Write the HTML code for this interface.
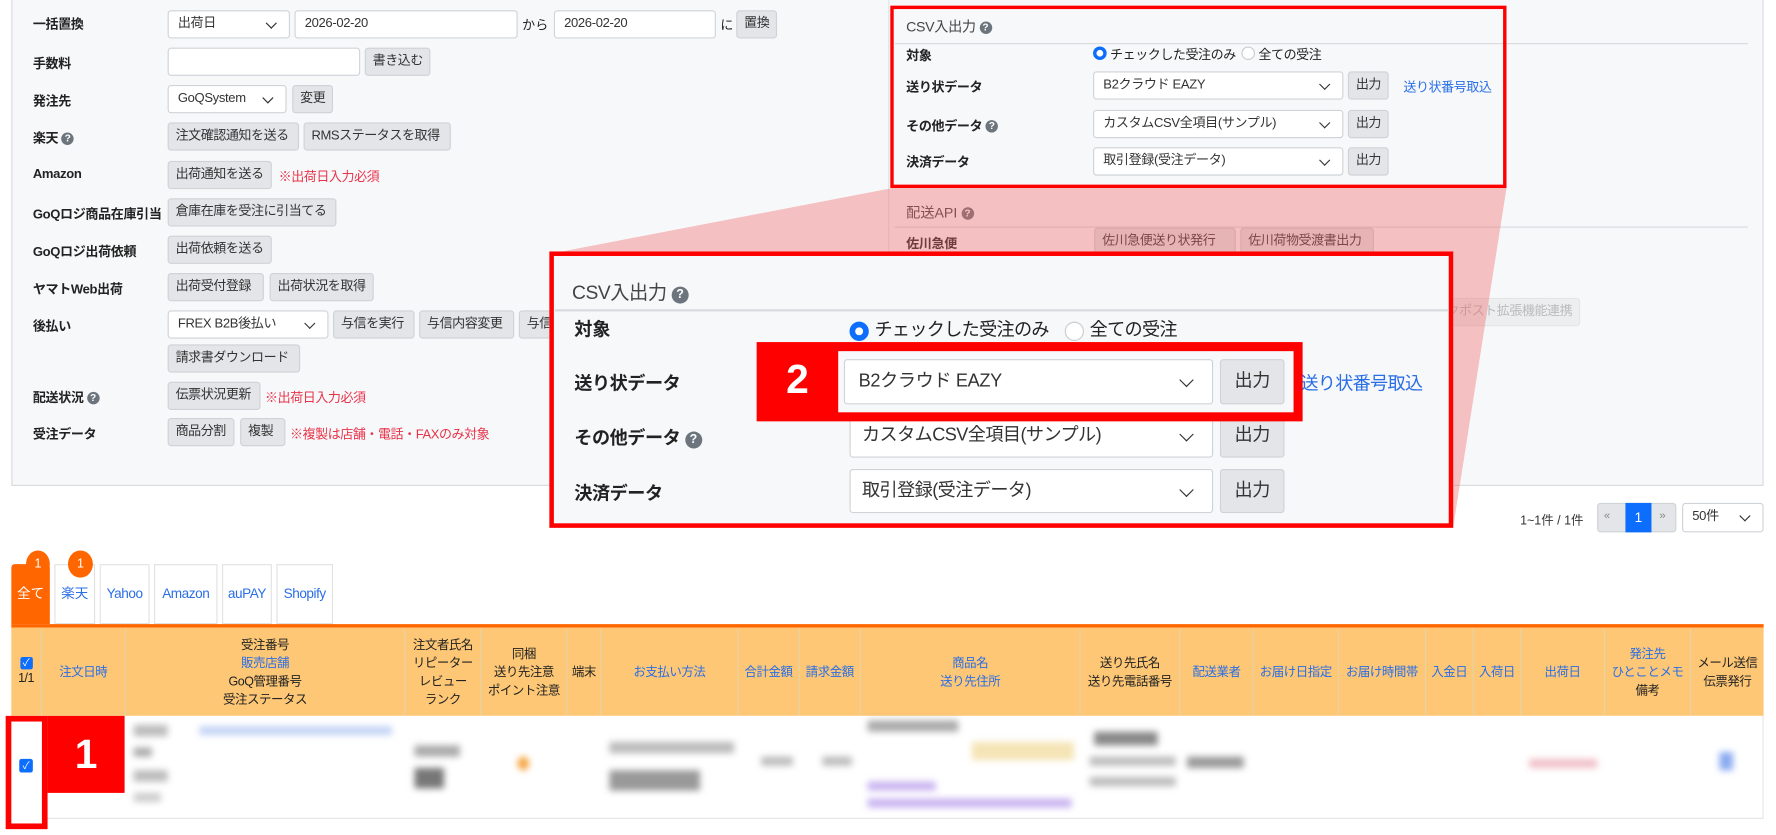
<!DOCTYPE html>
<html><head><meta charset="utf-8"><style>
*{box-sizing:border-box;margin:0;padding:0}
html,body{width:1776px;height:835px;overflow:hidden;background:#fff;font-family:"Liberation Sans","Noto Sans CJK JP",sans-serif;color:#222}
#w{position:absolute;left:0;top:0;width:1568px;height:737px;transform:scale(1.1327);transform-origin:0 0}
.a{position:absolute}
.lbl{position:absolute;font-size:11.5px;font-weight:bold;color:#222;letter-spacing:-0.3px}
.btn{position:absolute;height:25px;background:#e3e5e8;border:1px solid #cfd2d6;border-radius:3px;font-size:11.5px;line-height:23px;padding:0 6px;color:#333;white-space:nowrap;letter-spacing:-0.4px}
.inp{position:absolute;height:25px;background:#fff;border:1px solid #d0d3d7;border-radius:3px;font-size:11.5px;line-height:23px;padding:0 8px;color:#333;white-space:nowrap;letter-spacing:-0.3px}
.sel::after{content:"";position:absolute;right:12px;top:7px;width:6px;height:6px;border-right:1.5px solid #333;border-bottom:1.5px solid #333;transform:rotate(45deg)}
.big::after{top:13px;width:8px;height:8px;right:18px}
.red{color:#e8344a;font-size:11.5px;position:absolute;letter-spacing:-0.4px}
.q{display:inline-block;width:11px;height:11px;border-radius:50%;background:#6c757d;color:#fff;font-size:9px;line-height:11px;text-align:center;vertical-align:1px;font-weight:bold;letter-spacing:0}
.th{position:absolute;top:555px;height:77px;display:flex;align-items:center;justify-content:center;text-align:center;font-size:11px;line-height:16px;border-right:1px solid #e8d2a8;letter-spacing:-0.4px}
.b{color:#2a6ee6}
.blur{position:absolute;filter:blur(3px)}
</style></head><body><div id="w">
<div class="a" style="left:10px;top:0;width:1547px;height:429px;background:#f7f8fa;border:1px solid #d8dbdf;border-top:none"></div>
<div class="lbl" style="left:29px;top:13px">一括置換</div>
<div class="inp sel" style="left:148px;top:9px;width:108px">出荷日</div>
<div class="inp" style="left:260px;top:9px;width:197px">2026-02-20</div>
<div class="a" style="left:461px;top:14px;font-size:11.5px">から</div>
<div class="inp" style="left:489px;top:9px;width:143px">2026-02-20</div>
<div class="a" style="left:636px;top:14px;font-size:11.5px">に</div>
<div class="btn" style="left:650px;top:9px">置換</div>
<div class="lbl" style="left:29px;top:48px">手数料</div>
<div class="inp" style="left:148px;top:42px;width:170px"></div>
<div class="btn" style="left:322px;top:42px">書き込む</div>
<div class="lbl" style="left:29px;top:81px">発注先</div>
<div class="inp sel" style="left:148px;top:75px;width:105px">GoQSystem</div>
<div class="btn" style="left:258px;top:75px">変更</div>
<div class="lbl" style="left:29px;top:114px">楽天 <span class="q">?</span></div>
<div class="btn" style="left:148px;top:108px;width:116px">注文確認通知を送る</div>
<div class="btn" style="left:268px;top:108px;width:130px">RMSステータスを取得</div>
<div class="lbl" style="left:29px;top:148px">Amazon</div>
<div class="btn" style="left:148px;top:142px;width:92px">出荷通知を送る</div>
<div class="red" style="left:246px;top:148px">※出荷日入力必須</div>
<div class="lbl" style="left:29px;top:181px">GoQロジ商品在庫引当</div>
<div class="btn" style="left:148px;top:175px;width:149px">倉庫在庫を受注に引当てる</div>
<div class="lbl" style="left:29px;top:214px">GoQロジ出荷依頼</div>
<div class="btn" style="left:148px;top:208px;width:92px">出荷依頼を送る</div>
<div class="lbl" style="left:29px;top:247px">ヤマトWeb出荷</div>
<div class="btn" style="left:148px;top:241px;width:85px">出荷受付登録</div>
<div class="btn" style="left:238px;top:241px;width:92px">出荷状況を取得</div>
<div class="lbl" style="left:29px;top:280px">後払い</div>
<div class="inp sel" style="left:148px;top:274px;width:142px">FREX B2B後払い</div>
<div class="btn" style="left:294px;top:274px;width:72px">与信を実行</div>
<div class="btn" style="left:370px;top:274px;width:84px">与信内容変更</div>
<div class="btn" style="left:458px;top:274px;width:30px">与信</div>
<div class="btn" style="left:148px;top:304px;width:117px">請求書ダウンロード</div>
<div class="lbl" style="left:29px;top:343px">配送状況 <span class="q">?</span></div>
<div class="btn" style="left:148px;top:337px;width:82px">伝票状況更新</div>
<div class="red" style="left:234px;top:343px">※出荷日入力必須</div>
<div class="lbl" style="left:29px;top:375px">受注データ</div>
<div class="btn" style="left:148px;top:369px;width:59px">商品分割</div>
<div class="btn" style="left:212px;top:369px;width:40px">複製</div>
<div class="red" style="left:256px;top:375px">※複製は店舗・電話・FAXのみ対象</div>
<div class="a" style="left:784px;top:0;width:1px;height:429px;background:#e3e5e8"></div>
<div class="a" style="left:800px;top:13px;font-size:12.5px;color:#444;letter-spacing:-0.3px">CSV入出力 <span class="q">?</span></div>
<div class="a" style="left:790px;top:38px;width:753px;height:1px;background:#d8dbdf"></div>
<div class="lbl" style="left:800px;top:41px">対象</div>
<div class="a" style="left:965px;top:41px;width:12px;height:12px;border-radius:50%;border:3.5px solid #0d6efd;background:#fff"></div>
<div class="a" style="left:980px;top:40px;font-size:11.5px;letter-spacing:-0.4px">チェックした受注のみ</div>
<div class="a" style="left:1096px;top:41px;width:12px;height:12px;border-radius:50%;border:1px solid #ccc;background:#fff"></div>
<div class="a" style="left:1111px;top:40px;font-size:11.5px;letter-spacing:-0.4px">全ての受注</div>
<div class="lbl" style="left:800px;top:69px">送り状データ</div>
<div class="inp sel" style="left:965px;top:63px;width:221px">B2クラウド EAZY</div>
<div class="btn" style="left:1190px;top:63px">出力</div>
<div class="a" style="left:1239px;top:69px;font-size:11.5px;color:#2a6ee6;letter-spacing:-0.4px">送り状番号取込</div>
<div class="lbl" style="left:800px;top:103px">その他データ <span class="q">?</span></div>
<div class="inp sel" style="left:965px;top:97px;width:221px">カスタムCSV全項目(サンプル)</div>
<div class="btn" style="left:1190px;top:97px">出力</div>
<div class="lbl" style="left:800px;top:135px">決済データ</div>
<div class="inp sel" style="left:965px;top:130px;width:221px">取引登録(受注データ)</div>
<div class="btn" style="left:1190px;top:130px">出力</div>
<div class="a" style="left:786px;top:5px;width:544px;height:161px;border:3px solid #f00"></div>
<div class="a" style="left:800px;top:177px;font-size:12.5px;color:#444">配送API <span class="q">?</span></div>
<div class="a" style="left:790px;top:200px;width:753px;height:1px;background:#d8dbdf"></div>
<div class="lbl" style="left:800px;top:207px">佐川急便</div>
<div class="btn" style="left:966px;top:201px;width:125px">佐川急便送り状発行</div>
<div class="btn" style="left:1095px;top:201px;width:118px">佐川荷物受渡書出力</div>
<div class="btn" style="left:1270px;top:263px;color:#bbb;background:#eceef0;border-color:#e5e5e5">クポスト拡張機能連携</div>
<svg class="a" style="left:0;top:0" width="1568" height="737"><polygon points="788,166 1330,166 1283,465 486,224" fill="rgba(240,100,100,0.38)"/></svg>
<div class="a" style="left:485px;top:222px;width:798px;height:244px;background:#f7f8fa;border:4px solid #f00"></div>
<div class="a" style="left:505px;top:244px;font-size:17px;color:#444;letter-spacing:-0.4px">CSV入出力 <span class="q" style="width:15px;height:15px;line-height:15px;font-size:11px">?</span></div>
<div class="a" style="left:490px;top:273px;width:789px;height:2px;background:#d8dbdf"></div>
<div class="a" style="left:507px;top:283px;font-size:16px;font-weight:bold;line-height:18px">対象</div>
<div class="a" style="left:750px;top:284px;width:17px;height:17px;border-radius:50%;border:5px solid #0d6efd;background:#fff"></div>
<div class="a" style="left:772px;top:283px;font-size:16px;line-height:18px;letter-spacing:-0.6px">チェックした受注のみ</div>
<div class="a" style="left:940px;top:284px;width:17px;height:17px;border-radius:50%;border:1px solid #ccc;background:#fff"></div>
<div class="a" style="left:962px;top:283px;font-size:16px;line-height:18px;letter-spacing:-0.6px">全ての受注</div>
<div class="a" style="left:507px;top:325px;font-size:16px;font-weight:bold;letter-spacing:-0.4px">送り状データ</div>
<div class="a" style="left:1148px;top:325px;font-size:16px;color:#2a6ee6;letter-spacing:-0.6px">送り状番号取込</div>
<div class="a" style="left:507px;top:373px;font-size:16px;font-weight:bold;letter-spacing:-0.4px">その他データ <span class="q" style="width:15px;height:15px;line-height:15px;font-size:11px">?</span></div>
<div class="inp sel big" style="left:750px;top:365px;width:321px;height:39px;font-size:16px;line-height:37px;padding-left:10px;letter-spacing:-0.5px">カスタムCSV全項目(サンプル)</div>
<div class="btn" style="left:1077px;top:365px;width:57px;height:39px;font-size:16px;line-height:37px;text-align:center">出力</div>
<div class="a" style="left:507px;top:422px;font-size:16px;font-weight:bold;letter-spacing:-0.4px">決済データ</div>
<div class="inp sel big" style="left:750px;top:414px;width:321px;height:39px;font-size:16px;line-height:37px;padding-left:10px;letter-spacing:-0.5px">取引登録(受注データ)</div>
<div class="btn" style="left:1077px;top:414px;width:57px;height:39px;font-size:16px;line-height:37px;text-align:center">出力</div>
<div class="a" style="left:668px;top:302px;width:482px;height:70px;background:#f00"></div>
<div class="a" style="left:740px;top:310px;width:402px;height:54px;background:#f7f8fa"></div>
<div class="a" style="left:668px;top:310px;width:72px;text-align:center;color:#fff;font-size:36px;font-weight:bold;line-height:50px">2</div>
<div class="inp sel big" style="left:745px;top:317px;width:326px;height:40px;font-size:16px;line-height:38px;padding-left:12px">B2クラウド EAZY</div>
<div class="btn" style="left:1077px;top:317px;width:57px;height:40px;font-size:16px;line-height:38px;text-align:center">出力</div>
<div class="a" style="left:1342px;top:451px;font-size:11px;color:#333">1~1件 / 1件</div>
<div class="a" style="left:1410px;top:444px;width:70px;height:26px;background:#e3e5e8;border:1px solid #d0d3d7;border-radius:3px"></div>
<div class="a" style="left:1416px;top:450px;font-size:10px;color:#888">«</div>
<div class="a" style="left:1435px;top:444px;width:23px;height:26px;background:#0d6efd;color:#fff;font-size:12px;text-align:center;line-height:26px">1</div>
<div class="a" style="left:1465px;top:450px;font-size:10px;color:#888">»</div>
<div class="inp sel" style="left:1485px;top:444px;width:72px;height:26px">50件</div>
<div class="a" style="left:10px;top:498px;width:34px;height:53px;background:#f60;border-radius:3px 3px 0 0;color:#fff;font-size:12px;line-height:53px;text-align:center">全て</div>
<div class="a" style="left:48px;top:498px;width:36px;height:53px;border:1px solid #e2e2e2;color:#2a6ee6;font-size:12px;line-height:51px;text-align:center">楽天</div>
<div class="a" style="left:88px;top:498px;width:44px;height:53px;border:1px solid #e2e2e2;color:#2a6ee6;font-size:12px;line-height:51px;text-align:center;letter-spacing:-0.4px">Yahoo</div>
<div class="a" style="left:136px;top:498px;width:56px;height:53px;border:1px solid #e2e2e2;color:#2a6ee6;font-size:12px;line-height:51px;text-align:center;letter-spacing:-0.4px">Amazon</div>
<div class="a" style="left:196px;top:498px;width:44px;height:53px;border:1px solid #e2e2e2;color:#2a6ee6;font-size:12px;line-height:51px;text-align:center;letter-spacing:-0.4px">auPAY</div>
<div class="a" style="left:244px;top:498px;width:50px;height:53px;border:1px solid #e2e2e2;color:#2a6ee6;font-size:12px;line-height:51px;text-align:center;letter-spacing:-0.4px">Shopify</div>
<div class="a" style="left:23px;top:486px;width:21px;height:24px;border-radius:50%;background:#f60;color:#fff;font-size:11px;text-align:center;line-height:24px">1</div>
<div class="a" style="left:60px;top:486px;width:22px;height:24px;border-radius:50%;background:#f60;color:#fff;font-size:11px;text-align:center;line-height:24px">1</div>
<div class="a" style="left:10px;top:551px;width:1547px;height:3px;background:#f60"></div>
<div class="a" style="left:10px;top:554px;width:1547px;height:78px;background:#fdc775"></div>
<div class="th" style="left:10px;width:27px;flex-direction:column"><span style="display:inline-block;width:11px;height:11px;background:#0d6efd;border-radius:2px;color:#fff;font-size:9px;line-height:11px">✓</span>1/1</div>
<div class="th b" style="left:37px;width:74px">注文日時</div>
<div class="th" style="left:111px;width:247px"><span>受注番号<br><span class="b">販売店舗</span><br>GoQ管理番号<br>受注ステータス</span></div>
<div class="th" style="left:358px;width:67px"><span>注文者氏名<br>リピーター<br>レビュー<br>ランク</span></div>
<div class="th" style="left:425px;width:76px"><span>同梱<br>送り先注意<br>ポイント注意</span></div>
<div class="th" style="left:501px;width:30px">端末</div>
<div class="th b" style="left:531px;width:121px">お支払い方法</div>
<div class="th b" style="left:652px;width:54px">合計金額</div>
<div class="th b" style="left:706px;width:54px">請求金額</div>
<div class="th b" style="left:760px;width:194px"><span>商品名<br>送り先住所</span></div>
<div class="th" style="left:954px;width:88px"><span>送り先氏名<br>送り先電話番号</span></div>
<div class="th b" style="left:1042px;width:65px">配送業者</div>
<div class="th b" style="left:1107px;width:75px">お届け日指定</div>
<div class="th b" style="left:1182px;width:77px">お届け時間帯</div>
<div class="th b" style="left:1259px;width:42px">入金日</div>
<div class="th b" style="left:1301px;width:42px">入荷日</div>
<div class="th b" style="left:1343px;width:74px">出荷日</div>
<div class="th" style="left:1417px;width:76px"><span><span class="b">発注先<br>ひとことメモ</span><br>備考</span></div>
<div class="th" style="left:1493px;width:64px;border-right:none"><span>メール送信<br>伝票発行</span></div>
<div class="a" style="left:10px;top:632px;width:1547px;height:91px;border:1px solid #e5e5e5;border-top:none;background:#fff"></div>
<div class="blur" style="left:118px;top:640px;width:30px;height:10px;background:#bbb"></div>
<div class="blur" style="left:176px;top:641px;width:170px;height:8px;background:#c4d4f5"></div>
<div class="blur" style="left:118px;top:660px;width:16px;height:8px;background:#aaa"></div>
<div class="blur" style="left:118px;top:680px;width:30px;height:10px;background:#bbb"></div>
<div class="blur" style="left:118px;top:700px;width:24px;height:8px;background:#ccc"></div>
<div class="blur" style="left:366px;top:658px;width:40px;height:10px;background:#aaa"></div>
<div class="blur" style="left:366px;top:678px;width:26px;height:18px;background:#777"></div>
<div class="blur" style="left:457px;top:668px;width:10px;height:12px;background:#f4a33a;border-radius:50%"></div>
<div class="blur" style="left:538px;top:655px;width:110px;height:10px;background:#bbb"></div>
<div class="blur" style="left:538px;top:680px;width:80px;height:18px;background:#999"></div>
<div class="blur" style="left:672px;top:668px;width:28px;height:8px;background:#bbb"></div>
<div class="blur" style="left:726px;top:668px;width:26px;height:8px;background:#bbb"></div>
<div class="blur" style="left:766px;top:636px;width:80px;height:10px;background:#aaa"></div>
<div class="blur" style="left:858px;top:655px;width:90px;height:16px;background:#f5e4b5"></div>
<div class="blur" style="left:766px;top:690px;width:60px;height:8px;background:#c9b3f0"></div>
<div class="blur" style="left:766px;top:705px;width:180px;height:8px;background:#c9b3f0"></div>
<div class="blur" style="left:966px;top:646px;width:56px;height:12px;background:#888"></div>
<div class="blur" style="left:962px;top:668px;width:76px;height:8px;background:#bbb"></div>
<div class="blur" style="left:962px;top:686px;width:76px;height:8px;background:#bbb"></div>
<div class="blur" style="left:1048px;top:668px;width:50px;height:10px;background:#999"></div>
<div class="blur" style="left:1350px;top:670px;width:60px;height:8px;background:#f0c0c8"></div>
<div class="blur" style="left:1518px;top:664px;width:12px;height:16px;background:#8aaaf0"></div>
<div class="a" style="left:5px;top:632px;width:37px;height:100px;border:5px solid #f00;background:#fff"></div>
<div class="a" style="left:42px;top:632px;width:68px;height:68px;background:#f00;color:#fff;font-size:36px;font-weight:bold;text-align:center;line-height:68px">1</div>
<div class="a" style="left:17px;top:670px;width:12px;height:12px;background:#0d6efd;border-radius:2px;color:#fff;font-size:9px;line-height:12px;text-align:center">✓</div>
</div></body></html>
